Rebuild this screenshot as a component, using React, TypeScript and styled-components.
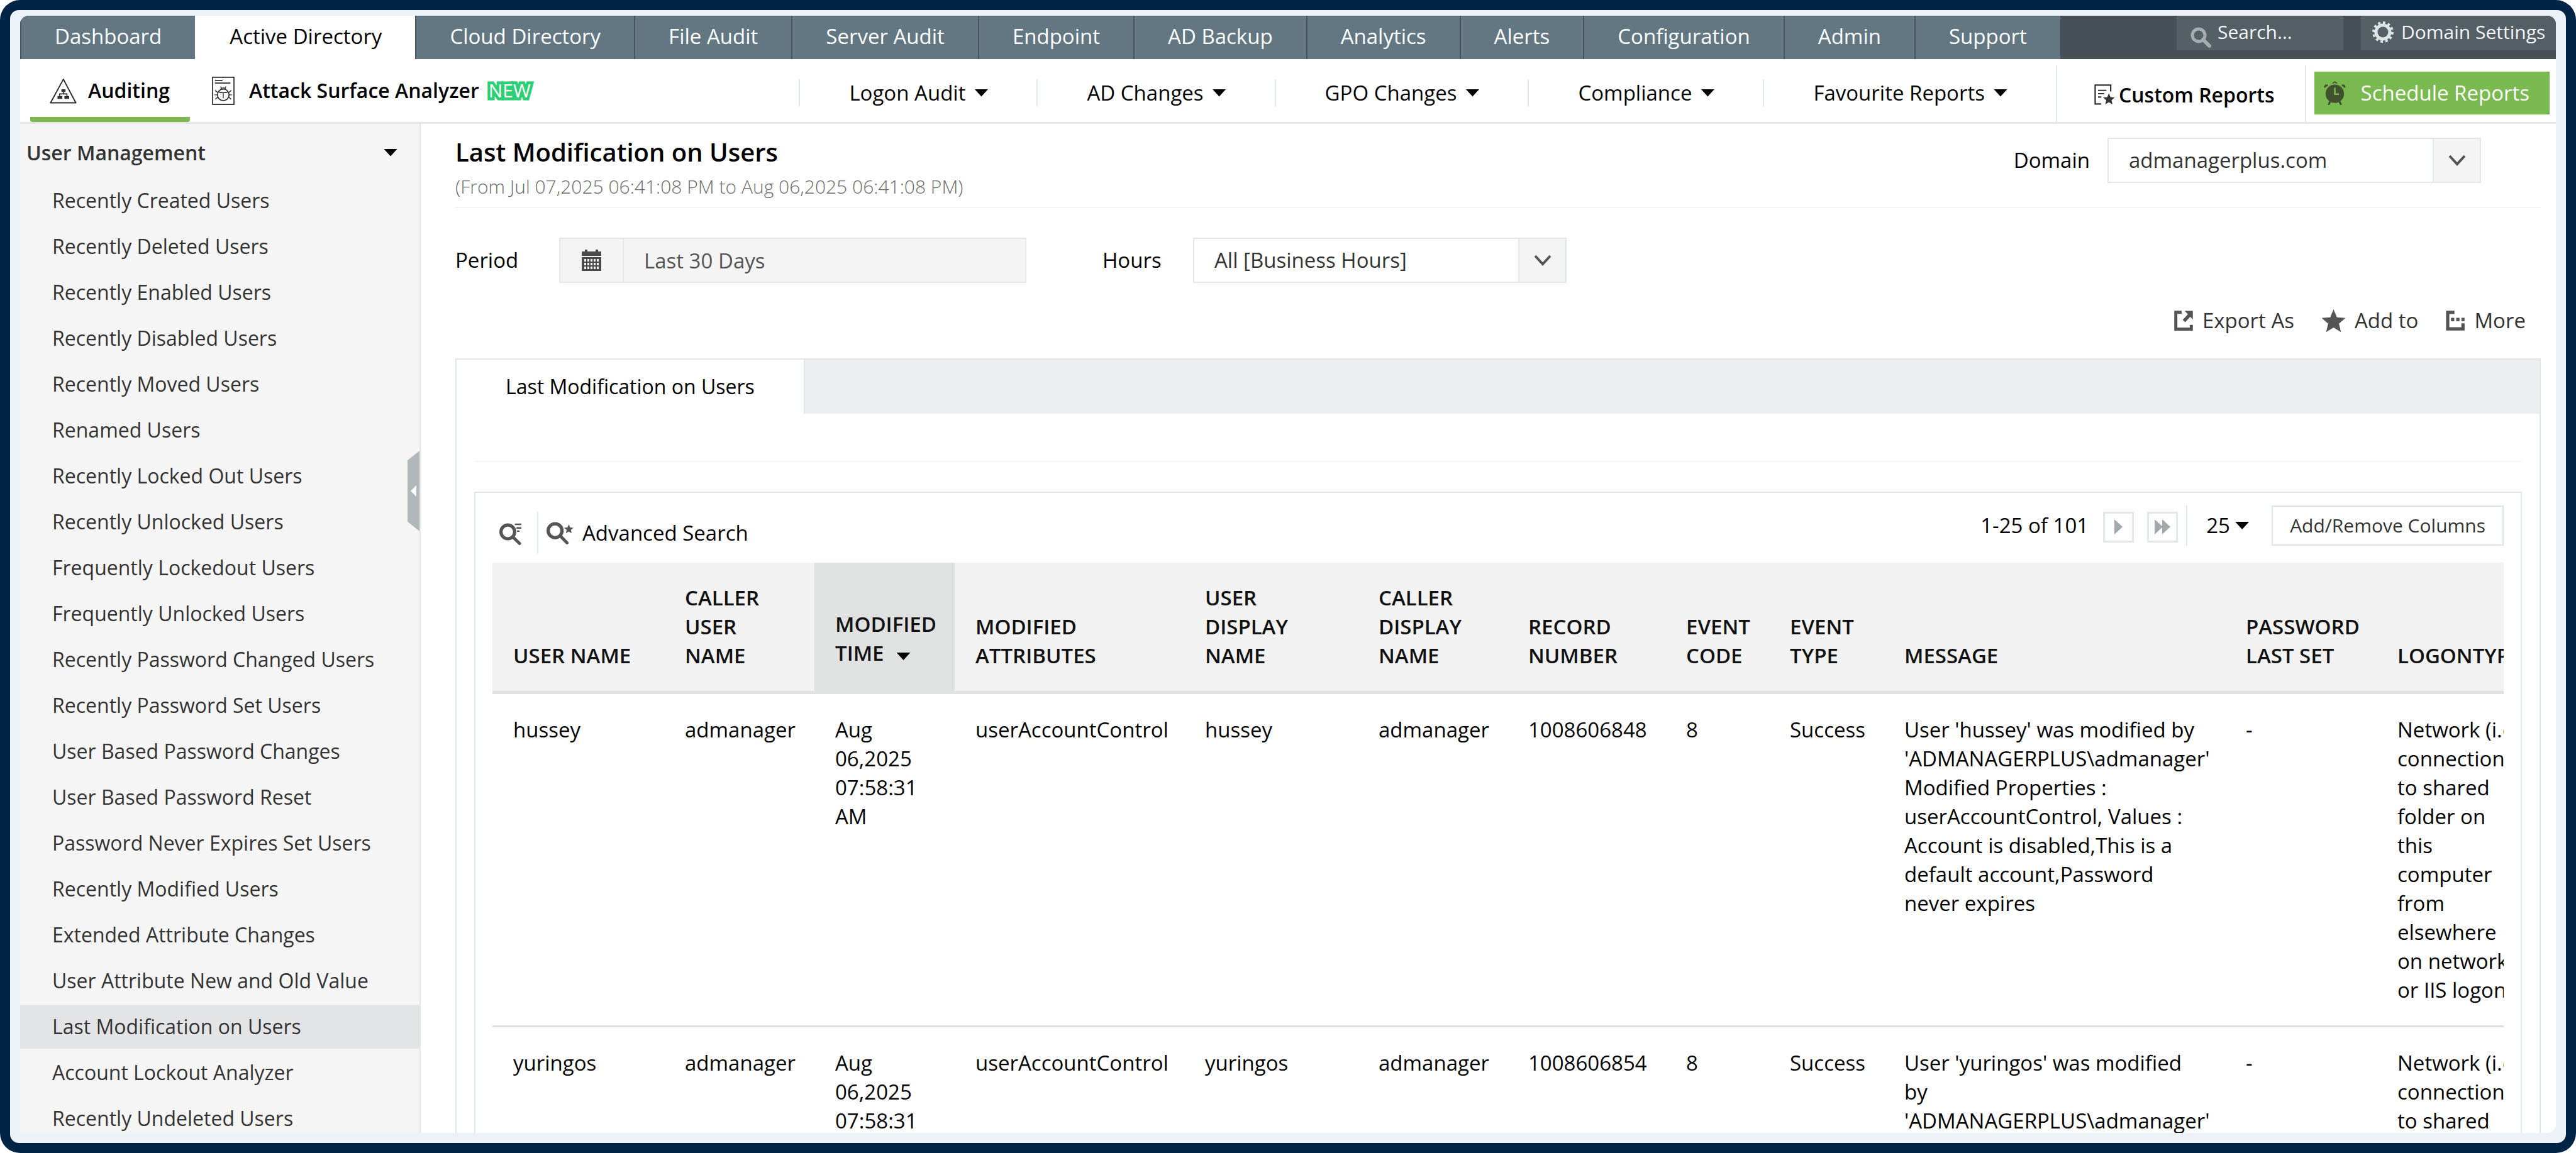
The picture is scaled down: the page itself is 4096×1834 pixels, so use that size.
import React from 'react';
import styled, { createGlobalStyle, css } from 'styled-components';

const line = '#e4e7e8';
const font = '"Open Sans", "Noto Sans", sans-serif';

const GlobalStyle = createGlobalStyle`
  *, *::before, *::after { box-sizing: border-box; }
  body {
    margin: 0;
    background: #fff;
    color: #000;
    font: 400 33px/46px ${font};
  }
  button, input, select { font: inherit; color: inherit; margin: 0; }
  a { color: inherit; text-decoration: none; }
  svg { display: block; flex: none; }
`;

/* ---------- frame ---------- */

const Frame = styled.div`
  height: 100vh;
  padding: 16px;
  border-radius: 32px;
  background: #002446;
  overflow: hidden;
`;

const Mat = styled.div`
  height: 100%;
  padding: 9px 16px 16px;
  border-radius: 14px;
  background: #edf1f8;
`;

const Screen = styled.div`
  display: flex;
  flex-direction: column;
  height: 100%;
  border-radius: 14px 14px 14px 0;
  background: #fff;
  overflow: hidden;
`;

/* ---------- top navigation ---------- */

const TopNav = styled.nav`
  display: flex;
  flex: none;
  height: 69px;
  background: #465056;
`;

const NavTab = styled.a<{ $active?: boolean }>`
  display: flex;
  align-items: center;
  padding: 0 53px 3px;
  border-left: 2px solid #46545d;
  background: #637783;
  color: #fff;
  white-space: nowrap;
  ${(p) =>
    p.$active &&
    css`
      background: #fff;
      border-color: #fff;
      color: #000;
    `}
`;

const NavTools = styled.div`
  display: flex;
  align-items: flex-start;
  gap: 28px;
  margin-left: auto;
  font-size: 30px;
  color: #f4f6f7;
`;

const SearchBox = styled.label`
  display: flex;
  align-items: center;
  gap: 10px;
  width: 265px;
  height: 55px;
  padding-left: 22px;
  background: #555f66;
  svg { align-self: flex-end; margin-bottom: 4px; }
`;

const SearchInput = styled.input`
  width: 100%;
  min-width: 0;
  padding: 0 0 4px;
  border: 0;
  background: none;
  outline: none;
  &::placeholder { color: #f4f6f7; opacity: 1; }
`;

const DomainSettings = styled.a`
  display: flex;
  align-items: center;
  gap: 12px;
  width: 310px;
  height: 55px;
  padding: 0 0 4px 18px;
  background: #555f66;
  white-space: nowrap;
`;

/* ---------- second bar ---------- */

const SubNav = styled.nav`
  display: flex;
  flex: none;
  height: 103px;
  border-bottom: 3px solid #e4e6e6;
  white-space: nowrap;
`;

const SectionTab = styled.a<{ $active?: boolean }>`
  display: flex;
  align-items: center;
  gap: 18px;
  margin-left: 16px;
  padding: 8px 32px 0 31px;
  border-bottom: 8px solid transparent;
  font-size: 32px;
  font-weight: 600;
  ${(p) =>
    p.$active &&
    css`
      background: linear-gradient(#7cb752, #7cb752) bottom / 100% 8px no-repeat border-box;
      border-radius: 4px;
    `}
  & + & { padding-left: 19px; gap: 23px; }
`;

const NewBadge = styled.span`
  margin-left: -12px;
  padding: 0 4px;
  font-size: 30px;
  line-height: 32px;
  font-weight: 400;
  color: #fff;
  -webkit-text-stroke: 9px #2dcf75;
  paint-order: stroke fill;
`;

const Menus = styled.div`
  display: flex;
  align-items: center;
  margin-left: auto;
  padding-top: 7px;
`;

const MenuButton = styled.button`
  display: flex;
  align-items: center;
  gap: 14px;
  height: 43px;
  padding: 0 77px 0 78px;
  border: 0;
  border-left: 2px solid ${line};
  background: none;
`;

const Caret = styled.span`
  width: 22px;
  height: 12px;
  flex: none;
  background: #000;
  clip-path: polygon(0 0, 100% 0, 50% 100%);
`;

const CustomReports = styled.a`
  display: flex;
  align-items: center;
  align-self: flex-end;
  gap: 6px;
  height: 90px;
  padding: 3px 48px 0 59px;
  border: 2px solid ${line};
  border-width: 0 2px;
  font-size: 32px;
  font-weight: 600;
`;

const ScheduleButton = styled.button`
  display: flex;
  align-items: center;
  align-self: flex-start;
  gap: 24px;
  height: 68px;
  margin: 20px 10px 0 13px;
  padding: 0 32px 0 15px;
  border: 0;
  background: #79b94f;
  color: #fff;
`;

/* ---------- body ---------- */

const Body = styled.div`
  display: grid;
  grid-template-columns: 637px minmax(0, 1fr);
  flex: 1;
  min-height: 0;
`;

const Sidebar = styled.aside`
  position: relative;
  border-right: 2px solid ${line};
  background: #f5f5f5;
  color: #333;
  overflow: hidden;
`;

const GroupButton = styled.button`
  display: flex;
  align-items: center;
  justify-content: space-between;
  width: 100%;
  height: 87px;
  padding: 4px 35px 0 10px;
  border: 0;
  background: none;
  font-size: 32px;
  font-weight: 600;
`;

const SideList = styled.ul`
  display: flex;
  flex-direction: column;
  gap: 3px;
  margin: 0;
  padding: 0;
  list-style: none;
`;

const SideLink = styled.a<{ $active: boolean }>`
  display: block;
  padding-left: 51px;
  font-size: 32px;
  line-height: 70px;
  background: ${(p) => (p.$active ? '#e3e4e6' : 'transparent')};
`;

const CollapseHandle = styled.button`
  position: absolute;
  top: 520px;
  right: 0;
  display: grid;
  place-items: center;
  width: 19px;
  height: 128px;
  padding: 0;
  border: 0;
  background: #b0b8b9;
  clip-path: polygon(0 12%, 100% 0, 100% 100%, 0 88%);
`;

const Main = styled.main`
  display: flex;
  flex-direction: column;
  min-width: 0;
  min-height: 0;
  padding: 0 24px 0 55px;
`;

const PageHead = styled.header`
  display: flex;
  justify-content: space-between;
  align-items: flex-start;
  flex: none;
  height: 134px;
  border-bottom: 2px solid #f1f3f4;
`;

const Title = styled.h1`
  margin: 17px 0 7px;
  font-size: 40px;
  line-height: 56px;
  font-weight: 600;
`;

const Subtitle = styled.p`
  margin: 0;
  font-size: 30px;
  line-height: 40px;
  font-weight: 300;
  color: #6e6e6e;
`;

const DomainField = styled.div`
  display: flex;
  align-items: center;
  gap: 28px;
  margin: 22px 95px 0 0;
`;

const SelectBox = styled.div`
  display: grid;
  width: 594px;
  height: 72px;
`;

const NativeSelect = styled.select`
  grid-area: 1 / 1;
  padding: 0 80px 0 32px;
  border: 2px solid ${line};
  border-radius: 0;
  background: #fff;
  color: #333;
  appearance: none;
`;

const SelectArrow = styled.span`
  grid-area: 1 / 1;
  justify-self: end;
  display: grid;
  place-items: center;
  width: 77px;
  border: 2px solid ${line};
  background: #f4f4f4;
  pointer-events: none;
`;

const Filters = styled.div`
  display: flex;
  align-items: center;
  flex: none;
  margin-top: 47px;
`;

const FilterLabel = styled.label<{ $width: number }>`
  width: ${(p) => p.$width}px;
`;

const PeriodBox = styled.div`
  display: flex;
  width: 743px;
  height: 72px;
  margin-right: 121px;
  border: 2px solid ${line};
  background: #f4f4f4;
`;

const CalendarCell = styled.span`
  display: grid;
  place-items: center;
  width: 101px;
  border-right: 2px solid ${line};
`;

const PeriodInput = styled.input`
  flex: 1;
  min-width: 0;
  padding: 2px 32px 0;
  border: 0;
  background: none;
  color: #555;
  outline: none;
`;

const Actions = styled.div`
  display: flex;
  justify-content: flex-end;
  flex: none;
  gap: 44px;
  margin: 37px 24px 37px 0;
`;

const ActionButton = styled.button`
  display: flex;
  align-items: center;
  gap: 15px;
  padding: 0;
  border: 0;
  background: none;
  color: #333;
`;

const TabStrip = styled.div`
  display: flex;
  flex: none;
  height: 88px;
  border: 2px solid ${line};
  border-bottom: 0;
  background: #eceeef;
`;

const ReportTab = styled.button`
  padding: 0 78px;
  border: 0;
  border-right: 2px solid ${line};
  background: #fff;
  font-size: 32px;
`;

const Panel = styled.section`
  display: flex;
  flex-direction: column;
  flex: 1;
  min-height: 0;
  padding: 75px 28px 0;
  border: 2px solid ${line};
  border-width: 0 2px;
`;

const PanelRule = styled.hr`
  width: 100%;
  margin: 0 0 47px;
  border: 0;
  border-top: 2px solid #f6f6f6;
`;

const Card = styled.div`
  flex: 1;
  min-height: 0;
  padding: 0 27px;
  border: 2px solid ${line};
  border-bottom: 0;
  overflow: hidden;
`;

const TableTools = styled.div`
  display: flex;
  justify-content: space-between;
  align-items: flex-start;
  height: 111px;
`;

const SearchTools = styled.div`
  display: flex;
  align-items: center;
  height: 67px;
  margin: 30px 0 0 11px;
`;

const IconButton = styled.button`
  padding: 4px 25px 0 0;
  border: 0;
  background: none;
`;

const AdvancedSearch = styled.button`
  display: flex;
  align-items: center;
  gap: 14px;
  padding: 0 0 0 13px;
  border: 0;
  background: none;
`;

const Divider = styled.span`
  align-self: stretch;
  width: 2px;
  background: ${line};
`;

const Pager = styled.div`
  display: flex;
  align-items: center;
  height: 64px;
  margin-top: 20px;
`;

const PageRange = styled.span`
  margin-right: 23px;
`;

const PageButton = styled.button`
  display: grid;
  place-items: center;
  width: 49px;
  height: 49px;
  margin: 4px 0 0 0;
  padding: 0;
  border: 3px solid ${line};
  background: #fff;
  & + & { margin-left: 21px; margin-right: 13px; }
`;

const PageSize = styled.label`
  display: grid;
  align-items: center;
  margin: 0 36px 0 30px;
  ${Caret} {
    grid-area: 1 / 1;
    justify-self: end;
    pointer-events: none;
  }
`;

const PageSizeSelect = styled.select`
  grid-area: 1 / 1;
  padding: 0 30px 0 0;
  border: 0;
  background: none;
  appearance: none;
`;

const ColumnsButton = styled.button`
  height: 64px;
  padding: 0 27px;
  border: 2px solid #dfe4e5;
  background: #fff;
  font-size: 30px;
  color: #333;
`;

const TableClip = styled.div`
  overflow: hidden;
`;

const Table = styled.table`
  width: 3260px;
  table-layout: fixed;
  border-collapse: separate;
  border-spacing: 0;
`;

const HeadCell = styled.th<{ $sorted?: boolean }>`
  padding: 33px 29px ${(p) => (p.$sorted ? 37 : 33)}px 33px;
  border-bottom: 5px solid #e0e2e2;
  background: ${(p) => (p.$sorted ? '#e0e2e2' : '#f2f2f2')};
  font-weight: 600;
  text-align: left;
  vertical-align: bottom;
  color: #111;
  ${Caret} { display: inline-block; margin: 0 0 1px 20px; }
`;

const Cell = styled.td`
  padding: 34px 29px 33px 33px;
  border-bottom: 3px solid #dcdddd;
  vertical-align: top;
`;

/* ---------- icons ---------- */

const starPoints = (cx: number, cy: number, r: number) =>
  Array.from({ length: 10 }, (_, i) => {
    const a = (Math.PI / 5) * i - Math.PI / 2;
    const d = i % 2 ? r * 0.45 : r;
    return `${(cx + d * Math.cos(a)).toFixed(1)},${(cy + d * Math.sin(a)).toFixed(1)}`;
  }).join(' ');

const AuditIcon = () => (
  <svg width="43" height="41" viewBox="0 0 152 144" fill="none" stroke="#2d2d2d">
    <path d="M77 7 5 139H147Z" strokeWidth="7" strokeLinejoin="round" />
    <path d="M66 63h23v15H66zM44 101h27v16H44zM83 101h26v16H83z" fill="#2d2d2d" stroke="none" />
    <path d="M77 78v11M56 101V89H97V101" strokeWidth="6" />
  </svg>
);

const AttackIcon = () => (
  <svg width="36" height="45" viewBox="0 0 124 156" fill="none" stroke="#2d2d2d" strokeWidth="6">
    <path d="M3 3H121V153H3Z" strokeLinejoin="round" />
    <path d="M16 20H58M16 35H101" />
    <circle cx="62" cy="100" r="32" />
    <path d="M36 84Q62 92 88 84M62 88V119M46 70Q62 52 78 70M47 54l6 10M77 54l-6 10" strokeWidth="5" />
    <path d="M17 76l14 10M14 100H30M18 124l14-11M107 76l-14 10M110 100H94M106 124l-14-11" strokeWidth="5" />
  </svg>
);

const CustomIcon = () => (
  <svg width="33" height="33" viewBox="0 0 113 115" fill="none" stroke="#333">
    <path d="M90 40V5H4V109H38" strokeWidth="8" />
    <path d="M20 34H66M20 52H54M20 71H38" strokeWidth="7" />
    <polygon points={starPoints(80, 84, 34)} fill="#333" stroke="none" />
  </svg>
);

const ClockIcon = () => (
  <svg width="35" height="38" viewBox="0 0 122 132" fill="none" stroke="#40512f">
    <circle cx="61" cy="70" r="51" fill="#40512f" stroke="none" />
    <path d="M47 12Q61-6 75 12Q61 5 47 12Z" strokeWidth="3" fill="#40512f" />
    <path d="M3 39C-4 22 16 12 25 22ZM119 39C126 22 106 12 97 22Z" fill="#40512f" stroke="none" />
    <path d="M36 112 28 127M86 112 94 127" strokeWidth="11" strokeLinecap="round" />
    <path d="M61 36V72H84" stroke="#79b94f" strokeWidth="9" />
  </svg>
);

const NavSearchIcon = () => (
  <svg width="33" height="33" viewBox="0 0 33 33" fill="none" stroke="#a6adb1">
    <circle cx="13" cy="13" r="10" strokeWidth="5" />
    <path d="M20 20 30 30" strokeWidth="6" strokeLinecap="round" />
  </svg>
);

const GearIcon = () => (
  <svg width="34" height="34" viewBox="0 0 34 34" fill="none" stroke="#dfe4e7">
    <circle cx="17" cy="17" r="11" strokeWidth="5" />
    <circle cx="17" cy="17" r="15" strokeWidth="4" pathLength="48" strokeDasharray="2 2" />
  </svg>
);

const Chevron = () => (
  <svg width="28" height="18" viewBox="0 0 28 18" fill="none" stroke="#555" strokeWidth="4">
    <path d="M2 2 14 15 26 2" />
  </svg>
);

const CalendarIcon = () => (
  <svg width="31" height="34" viewBox="0 0 31 34">
    <path d="M0 3H5V0H9V3H22V0H26V3H31V10H0ZM0 12H31V34H0Z" fill="#4a4a4a" />
    <g fill="#f4f4f4">
      {[15, 21, 27].map((y) =>
        [3, 8, 13, 18, 23].map((x) => <rect key={`${x}-${y}`} x={x + 1} y={y} width="3" height="4" />),
      )}
    </g>
  </svg>
);

const ExportIcon = () => (
  <svg width="30" height="32" viewBox="0 0 96 104" fill="none" stroke="#555">
    <path d="M38 9H8V96H88V74" strokeWidth="16" />
    <path d="M50 54 78 24" strokeWidth="18" />
    <path d="M54 2H96V46Z" fill="#555" stroke="none" />
  </svg>
);

const StarIcon = () => (
  <svg width="37" height="37" viewBox="0 0 37 37">
    <polygon points={starPoints(18.5, 20, 20)} fill="#555" />
  </svg>
);

const MoreIcon = () => (
  <svg width="30" height="32" viewBox="0 0 96 104" fill="none" stroke="#555">
    <path d="M44 9H9V95H88V66" strokeWidth="17" />
    <path d="M26 46H96" strokeWidth="18" strokeDasharray="17 10" />
  </svg>
);

const FilterSearchIcon = () => (
  <svg width="35" height="35" viewBox="0 0 122 122" fill="none" stroke="#555">
    <circle cx="47" cy="49" r="38" strokeWidth="18" />
    <path d="M78 80 112 113" strokeWidth="17" strokeLinecap="round" />
    <path d="M86 7H122M95 27H122M98 45H112" strokeWidth="8" />
  </svg>
);

const StarSearchIcon = () => (
  <svg width="43" height="36" viewBox="0 0 148 124" fill="none" stroke="#555">
    <circle cx="47" cy="49" r="38" strokeWidth="18" />
    <path d="M78 80 112 115" strokeWidth="17" strokeLinecap="round" />
    <polygon points={starPoints(122, 41, 27)} fill="#555" stroke="none" />
  </svg>
);

const NextIcon = () => (
  <svg width="13" height="24" viewBox="0 0 13 24">
    <path d="M0 0 13 12 0 24Z" fill="#a3a9ab" />
  </svg>
);

const LastIcon = () => (
  <svg width="25" height="24" viewBox="0 0 25 24">
    <path d="M0 0 13 12 0 24ZM12 0 25 12 12 24Z" fill="#a3a9ab" />
  </svg>
);

const HandleArrow = () => (
  <svg width="9" height="18" viewBox="0 0 9 18">
    <path d="M9 0V18L0 9Z" fill="#fff" />
  </svg>
);

/* ---------- data ---------- */

const navTabs = [
  'Dashboard', 'Active Directory', 'Cloud Directory', 'File Audit', 'Server Audit', 'Endpoint',
  'AD Backup', 'Analytics', 'Alerts', 'Configuration', 'Admin', 'Support',
];

const menus = ['Logon Audit', 'AD Changes', 'GPO Changes', 'Compliance', 'Favourite Reports'];

const sideItems = [
  'Recently Created Users', 'Recently Deleted Users', 'Recently Enabled Users',
  'Recently Disabled Users', 'Recently Moved Users', 'Renamed Users',
  'Recently Locked Out Users', 'Recently Unlocked Users', 'Frequently Lockedout Users',
  'Frequently Unlocked Users', 'Recently Password Changed Users', 'Recently Password Set Users',
  'User Based Password Changes', 'User Based Password Reset', 'Password Never Expires Set Users',
  'Recently Modified Users', 'Extended Attribute Changes', 'User Attribute New and Old Value',
  'Last Modification on Users', 'Account Lockout Analyzer', 'Recently Undeleted Users',
];

const columns: { name: string; width: number; sorted?: boolean }[] = [
  { name: 'USER NAME', width: 273 },
  { name: 'CALLER USER NAME', width: 239 },
  { name: 'MODIFIED TIME', width: 223, sorted: true },
  { name: 'MODIFIED ATTRIBUTES', width: 365 },
  { name: 'USER DISPLAY NAME', width: 276 },
  { name: 'CALLER DISPLAY NAME', width: 238 },
  { name: 'RECORD NUMBER', width: 251 },
  { name: 'EVENT CODE', width: 165 },
  { name: 'EVENT TYPE', width: 182 },
  { name: 'MESSAGE', width: 543 },
  { name: 'PASSWORD LAST SET', width: 241 },
  { name: 'LOGONTYPE', width: 264 },
];

const makeRow = (user: string, record: string) => [
  user,
  'admanager',
  'Aug 06,2025 07:58:31 AM',
  'userAccountControl',
  user,
  'admanager',
  record,
  '8',
  'Success',
  `User '${user}' was modified by 'ADMANAGERPLUS\\admanager' Modified Properties : userAccountControl, Values : Account is disabled,This is a default account,Password never expires`,
  '-',
  'Network (i.e. connection to shared folder on this computer from elsewhere on network or IIS logon',
];

const rows = [makeRow('hussey', '1008606848'), makeRow('yuringos', '1008606854')];

/* ---------- page ---------- */

function Header() {
  return (
    <>
      <TopNav aria-label="Modules">
        {navTabs.map((t) => (
          <NavTab key={t} href="#" $active={t === 'Active Directory'}>{t}</NavTab>
        ))}
        <NavTools>
          <SearchBox>
            <NavSearchIcon />
            <SearchInput type="text" placeholder="Search..." aria-label="Search" />
          </SearchBox>
          <DomainSettings href="#"><GearIcon />Domain Settings</DomainSettings>
        </NavTools>
      </TopNav>
      <SubNav aria-label="Active Directory">
        <SectionTab href="#" $active><AuditIcon />Auditing</SectionTab>
        <SectionTab href="#"><AttackIcon />Attack Surface Analyzer<NewBadge>NEW</NewBadge></SectionTab>
        <Menus>
          {menus.map((m) => (
            <MenuButton key={m} type="button">{m}<Caret /></MenuButton>
          ))}
        </Menus>
        <CustomReports href="#"><CustomIcon />Custom Reports</CustomReports>
        <ScheduleButton type="button"><ClockIcon />Schedule Reports</ScheduleButton>
      </SubNav>
    </>
  );
}

function SideMenu() {
  return (
    <Sidebar>
      <GroupButton type="button">User Management<Caret /></GroupButton>
      <SideList>
        {sideItems.map((s) => (
          <li key={s}>
            <SideLink href="#" $active={s === 'Last Modification on Users'}>{s}</SideLink>
          </li>
        ))}
      </SideList>
      <CollapseHandle type="button" aria-label="Collapse sidebar"><HandleArrow /></CollapseHandle>
    </Sidebar>
  );
}

function DropDown({ id, value }: { id: string; value: string }) {
  return (
    <SelectBox>
      <NativeSelect id={id} defaultValue={value}>
        <option>{value}</option>
      </NativeSelect>
      <SelectArrow><Chevron /></SelectArrow>
    </SelectBox>
  );
}

function ReportTable() {
  return (
    <TableClip>
      <Table>
        <colgroup>
          {columns.map((c) => <col key={c.name} width={c.width} />)}
        </colgroup>
        <thead>
          <tr>
            {columns.map((c) => (
              <HeadCell key={c.name} $sorted={c.sorted} scope="col">
                {c.name}
                {c.sorted && <Caret />}
              </HeadCell>
            ))}
          </tr>
        </thead>
        <tbody>
          {rows.map((r) => (
            <tr key={r[6]}>
              {r.map((v, i) => <Cell key={columns[i].name}>{v}</Cell>)}
            </tr>
          ))}
        </tbody>
      </Table>
    </TableClip>
  );
}

export default function App() {
  return (
    <>
      <GlobalStyle />
      <Frame>
        <Mat>
          <Screen>
            <Header />
            <Body>
              <SideMenu />
              <Main>
                <PageHead>
                  <div>
                    <Title>Last Modification on Users</Title>
                    <Subtitle>(From Jul 07,2025 06:41:08 PM to Aug 06,2025 06:41:08 PM)</Subtitle>
                  </div>
                  <DomainField>
                    <label htmlFor="domain">Domain</label>
                    <DropDown id="domain" value="admanagerplus.com" />
                  </DomainField>
                </PageHead>
                <Filters>
                  <FilterLabel htmlFor="period" $width={165}>Period</FilterLabel>
                  <PeriodBox>
                    <CalendarCell><CalendarIcon /></CalendarCell>
                    <PeriodInput id="period" type="text" defaultValue="Last 30 Days" />
                  </PeriodBox>
                  <FilterLabel htmlFor="hours" $width={144}>Hours</FilterLabel>
                  <DropDown id="hours" value="All [Business Hours]" />
                </Filters>
                <Actions>
                  <ActionButton type="button"><ExportIcon />Export As</ActionButton>
                  <ActionButton type="button"><StarIcon />Add to</ActionButton>
                  <ActionButton type="button"><MoreIcon />More</ActionButton>
                </Actions>
                <TabStrip>
                  <ReportTab type="button">Last Modification on Users</ReportTab>
                </TabStrip>
                <Panel>
                  <PanelRule />
                  <Card>
                    <TableTools>
                      <SearchTools>
                        <IconButton type="button" aria-label="Filter rows"><FilterSearchIcon /></IconButton>
                        <Divider />
                        <AdvancedSearch type="button"><StarSearchIcon />Advanced Search</AdvancedSearch>
                      </SearchTools>
                      <Pager>
                        <PageRange>1-25 of 101</PageRange>
                        <PageButton type="button" aria-label="Next page"><NextIcon /></PageButton>
                        <PageButton type="button" aria-label="Last page"><LastIcon /></PageButton>
                        <Divider />
                        <PageSize>
                          <PageSizeSelect aria-label="Rows per page" defaultValue="25">
                            <option>25</option>
                            <option>50</option>
                            <option>75</option>
                          </PageSizeSelect>
                          <Caret />
                        </PageSize>
                        <ColumnsButton type="button">Add/Remove Columns</ColumnsButton>
                      </Pager>
                    </TableTools>
                    <ReportTable />
                  </Card>
                </Panel>
              </Main>
            </Body>
          </Screen>
        </Mat>
      </Frame>
    </>
  );
}
